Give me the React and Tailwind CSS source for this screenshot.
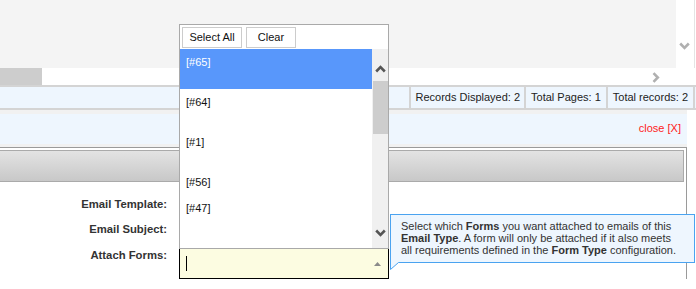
import React from "react";

function ChevronDown({ className }) {
  return (
    <svg className={className} width="11" height="8" viewBox="0 0 11 8">
      <polyline points="1.2,1.5 5.5,5.8 9.8,1.5" fill="none" stroke="currentColor" strokeWidth="2.6" />
    </svg>
  );
}
function ChevronUp({ className }) {
  return (
    <svg className={className} width="11" height="8" viewBox="0 0 11 8">
      <polyline points="1.2,6.5 5.5,2.2 9.8,6.5" fill="none" stroke="currentColor" strokeWidth="2.6" />
    </svg>
  );
}
function ChevronRight({ className }) {
  return (
    <svg className={className} width="8" height="11" viewBox="0 0 8 11">
      <polyline points="1.5,1.2 5.8,5.5 1.5,9.8" fill="none" stroke="currentColor" strokeWidth="2.6" />
    </svg>
  );
}

export default function App() {
  const items = [
    { label: "[#65]", h: "h-[40px]", sel: true },
    { label: "[#64]", h: "h-[40px]" },
    { label: "[#1]", h: "h-[40px]" },
    { label: "[#56]", h: "h-[26px]" },
    { label: "[#47]", h: "h-[40px]" },
  ];
  return (
    <div className="relative w-[696px] h-[289px] overflow-hidden bg-white font-['Liberation_Sans',Arial,sans-serif] text-[11px] leading-[13px] text-[#333]">
      {/* top grid area */}
      <div className="flex h-[68px]">
        <div className="w-[676px] bg-[#f4f4f4]" />
        <div className="flex-1 flex justify-center pt-[42px] pr-[1px] border-r border-[#e4e4e4] mr-[1px]">
          <ChevronDown className="text-[#b0b0b0]" />
        </div>
      </div>
      {/* horizontal scrollbar */}
      <div className="flex h-[17px] w-[676px] items-center">
        <div className="w-[42px] h-full bg-[#cdcdcd]" />
        <div className="flex-1" />
        <ChevronRight className="text-[#b0b0b0] mr-[16px] mt-[1px]" />
      </div>
      {/* info row */}
      <div className="flex h-[25px] justify-end border-t-2 border-b-2 border-[#d4d4d4] bg-[#eef6fe] pr-[1px]">
        <div className="flex items-center border-l-2 border-[#d4d4d4] pl-[5px] pr-[4px] text-[#222]">Records Displayed: 2</div>
        <div className="flex items-center border-l-2 border-[#d4d4d4] pl-[5px] pr-[5px] text-[#222]">Total Pages: 1</div>
        <div className="flex items-center border-l-2 border-r-2 border-[#d4d4d4] pl-[5px] pr-[5px] text-[#222]">Total records: 2</div>
      </div>
      {/* close panel */}
      <div className="w-[687px] bg-[#f1f1f1] pt-[4px] pb-[3px]">
        <div className="h-[30px] bg-[#eef6fe] flex items-center justify-end pr-[6px] pb-[2px]">
          <span className="text-[#ff1a1a]">close [X]</span>
        </div>
      </div>
      {/* content box */}
      <div className="w-[687px] border-t border-r border-[#9a9a9a] pt-[2px]">
        <div className="h-[32px] mr-[2px] border-t border-b border-r border-[#aaa] bg-gradient-to-b from-[#e3e3e3] to-[#c8c8c8]" />
        <div className="grid grid-cols-[179px_210px] pt-[9px]">
          <div className="h-[25px] pr-[12px] text-right font-bold text-[11.3px] pt-[7px]">Email Template:</div>
          <div />
          <div className="h-[25px] pr-[12px] text-right font-bold text-[11.3px] pt-[7px]">Email Subject:</div>
          <div />
          <div className="pr-[12px] text-right font-bold text-[11.3px] pt-[8px]">Attach Forms:</div>
          <div className="mt-[7px] h-[31px] border border-black bg-[#fcfce1] flex items-center justify-between pl-[6px] pr-[7px]">
            <div className="w-px h-[15px] bg-black" />
            <svg width="7" height="4" viewBox="0 0 7 4"><polygon points="0,4 3.5,0 7,4" fill="#8a8a8a" /></svg>
          </div>
        </div>
      </div>

      {/* dropdown overlay */}
      <div className="absolute left-[179px] top-[24px] w-[210px] h-[225px] border border-[#a9a9a9] bg-white flex flex-col">
        <div className="flex gap-[4px] pl-[2px] pt-[2px] h-[24px] shrink-0">
          <div className="w-[60px] h-[21px] border border-[#ccc] flex items-center justify-center text-[#111]">Select All</div>
          <div className="w-[50px] h-[21px] border border-[#ccc] flex items-center justify-center text-[#111]">Clear</div>
        </div>
        <div className="flex flex-1 overflow-hidden">
          <div className="flex-1">
            {items.map((it) => (
              <div
                key={it.label}
                className={`${it.h} pl-[6px] pt-[7px] ${it.sel ? "bg-[#5897fb] text-white" : "text-[#111]"}`}
              >
                {it.label}
              </div>
            ))}
          </div>
          <div className="w-[16px] bg-[#f0f0f0] flex flex-col items-center pt-[16px] pb-[11px]">
            <ChevronUp className="text-[#555]" />
            <div className="w-[15px] h-[53px] bg-[#cdcdcd] mt-[8px]" />
            <div className="flex-1" />
            <ChevronDown className="text-[#555]" />
          </div>
        </div>
      </div>

      {/* tooltip */}
      <div className="absolute left-[390px] top-[214px] w-[305px] h-[49px] border border-[#4aa3f0] bg-[#eef6fe] pl-[10px] pt-[5px] leading-[12px] text-[#333] whitespace-nowrap">
        Select which <b>Forms</b> you want attached to emails of this
        <br />
        <b>Email Type</b>. A form will only be attached if it also meets
        <br />
        all requirements defined in the <b>Form Type</b> configuration.
      </div>
      <svg className="absolute left-[390px] top-[261px]" width="12" height="12" viewBox="0 0 12 12">
        <polygon points="1,0 10,0 1,8.5" fill="#eef6fe" />
        <polyline points="0.5,0 0.5,8.5 8.5,1.5" fill="none" stroke="#4aa3f0" strokeWidth="1" />
      </svg>
    </div>
  );
}
